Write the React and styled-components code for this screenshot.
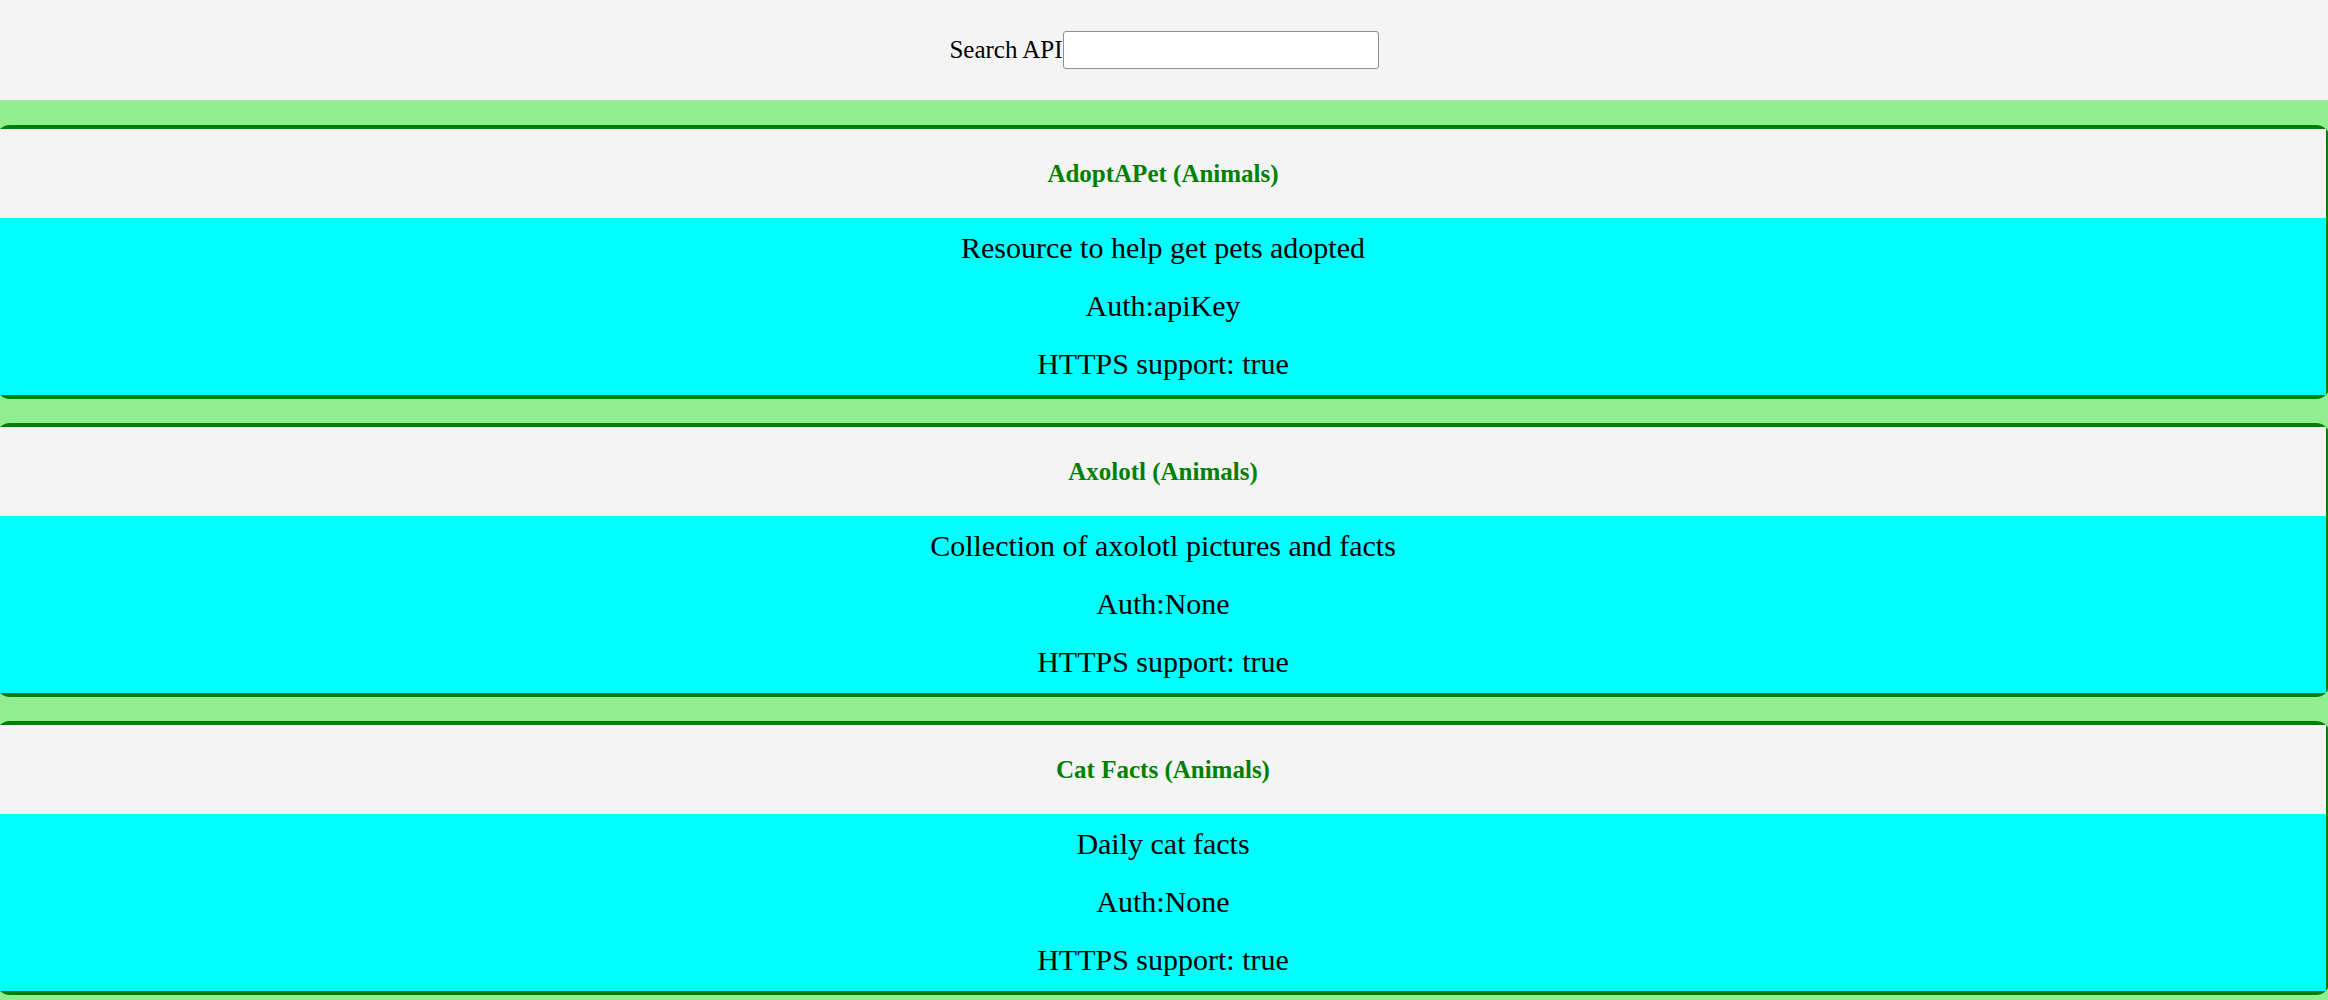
import React, { useState } from 'react';
import styled, { createGlobalStyle } from 'styled-components';

const GlobalStyle = createGlobalStyle`
  html {
    overflow: hidden;
  }
  body {
    margin: 0;
    background-color: #f4f4f4;
    font-family: "Liberation Serif", "Times New Roman", serif;
    color: #000;
  }
`

const Cabecalho = styled.header`
  height: 100px;
  display: flex;
  justify-content: center;
  align-items: center;
  background-color: #f4f4f4;
`

const Rotulo = styled.label`
  display: flex;
  align-items: center;
  font-size: 25px;
`

const CampoBusca = styled.input`
  box-sizing: border-box;
  width: 316px;
  height: 38px;
  margin: 0;
  border: 1px solid #8f8f8f;
  border-radius: 3px;
  background: #fff;
  font-size: 20px;
  font-family: inherit;
  padding: 0 6px;
`

const Lista = styled.main`
  background-color: #90ee90;
  padding: 25px 0;
  display: flex;
  flex-direction: column;
  gap: 24px;
  min-height: 850px;
`

const Cartao = styled.article`
  margin: 0 -2px 0 -4px;
  border: 4px solid #008000;
  border-radius: 14px;
`

const Titulo = styled.h4`
  margin: 0;
  padding: 31px 0;
  line-height: 27px;
  font-size: 25px;
  font-weight: bold;
  text-align: center;
  color: #008000;
  background-color: #f4f4f4;
`

const Detalhes = styled.section`
  background-color: #00ffff;
  padding: 13px 0 14px;
  display: flex;
  flex-direction: column;
  align-items: center;
  gap: 24px;
`

const Linha = styled.p`
  margin: 0;
  font-size: 30px;
  line-height: 34px;
`

const apis = [
  { API: 'AdoptAPet', Category: 'Animals', Description: 'Resource to help get pets adopted', Auth: 'apiKey', HTTPS: true },
  { API: 'Axolotl', Category: 'Animals', Description: 'Collection of axolotl pictures and facts', Auth: '', HTTPS: true },
  { API: 'Cat Facts', Category: 'Animals', Description: 'Daily cat facts', Auth: '', HTTPS: true },
]

const App = () => {
  const [busca, setBusca] = useState('')

  const filtradas = apis.filter((api) =>
    api.API.toLowerCase().includes(busca.toLowerCase())
  )

  return (
    <>
      <GlobalStyle />
      <Cabecalho>
        <Rotulo>
          Search API
          <CampoBusca value={busca} onChange={(e) => setBusca(e.target.value)} />
        </Rotulo>
      </Cabecalho>
      <Lista>
        {filtradas.map((api) => (
          <Cartao key={api.API}>
            <Titulo>{api.API} ({api.Category})</Titulo>
            <Detalhes>
              <Linha>{api.Description}</Linha>
              <Linha>Auth:{api.Auth === '' ? 'None' : api.Auth}</Linha>
              <Linha>HTTPS support: {String(api.HTTPS)}</Linha>
            </Detalhes>
          </Cartao>
        ))}
      </Lista>
    </>
  )
}

export default App
